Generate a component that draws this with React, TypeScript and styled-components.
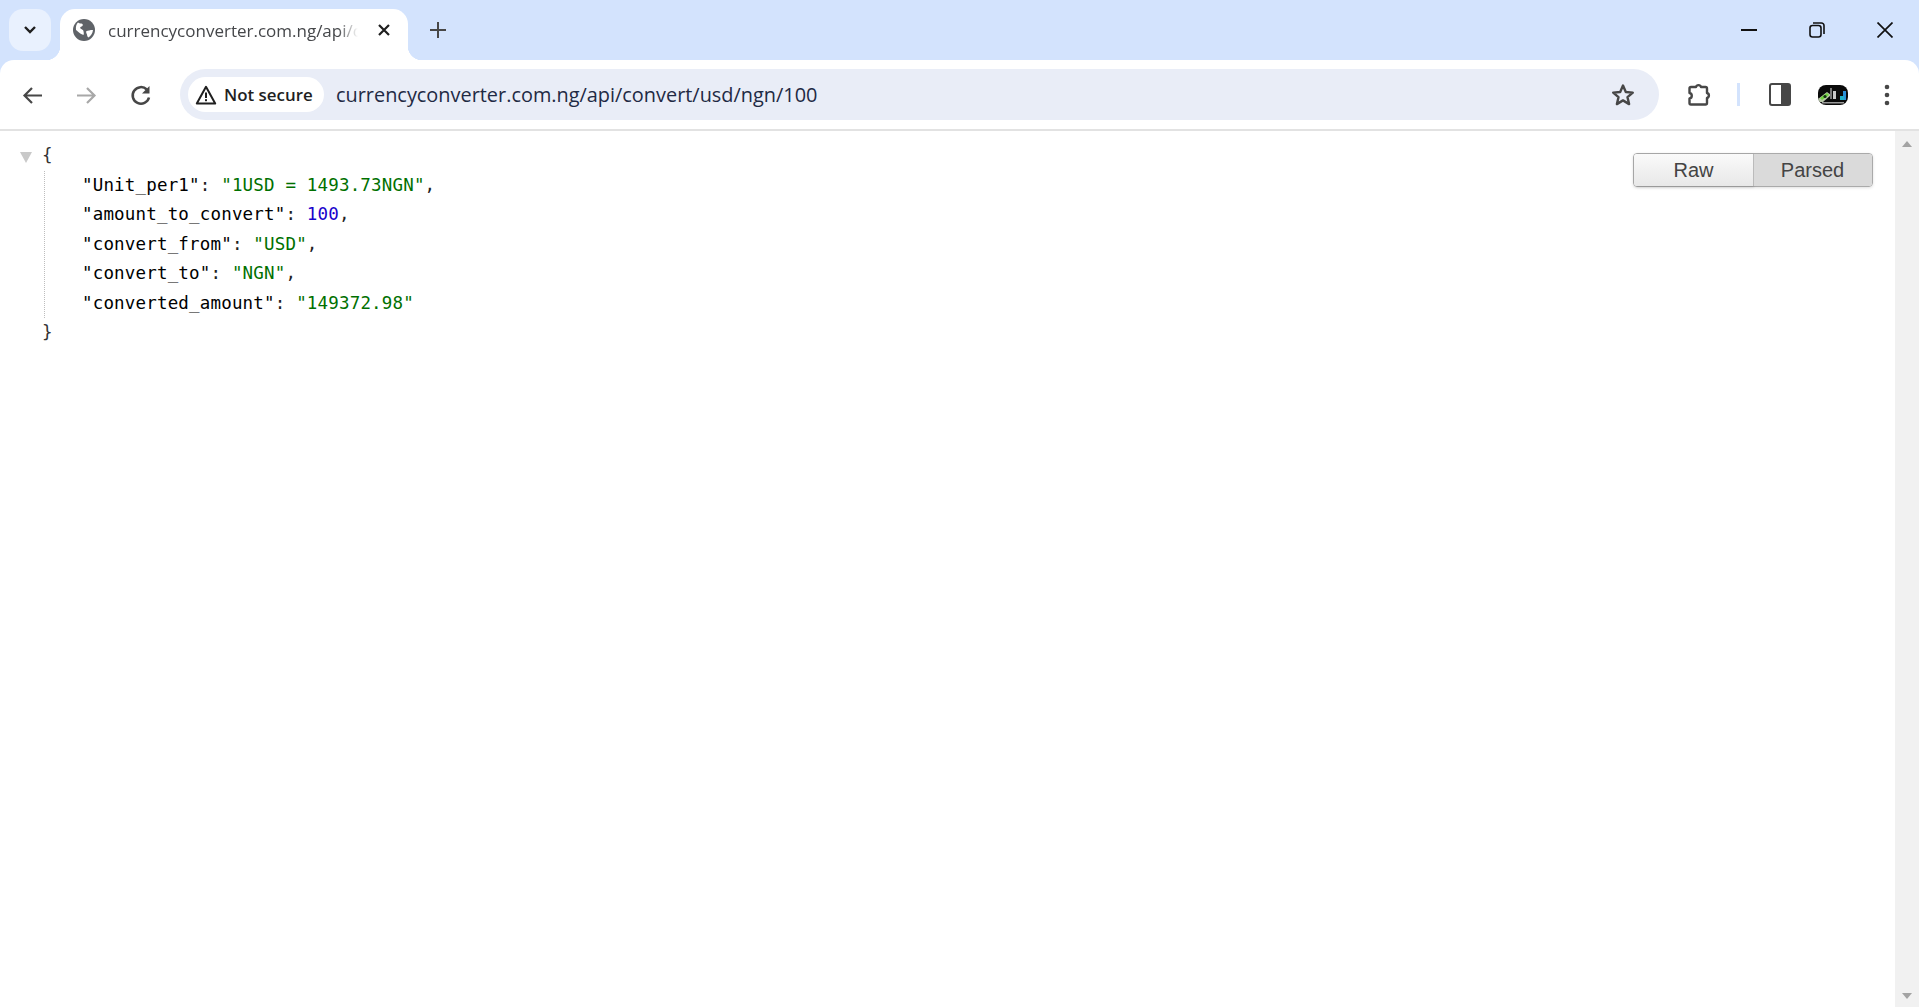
import React from 'react';
import styled, {createGlobalStyle} from "styled-components";

const GlobalStyle = createGlobalStyle`
  html, body {
    margin: 0;
    padding: 0;
    height: 100%;
    overflow: hidden;
    background: #d3e3fd;
  }
  #root {
    height: 100%;
  }
`

const uiFont = `"Open Sans", "Noto Sans", "Liberation Sans", sans-serif`

const BackIcon = ({color}: { color: string }) => (
    <svg width="24" height="24" viewBox="0 0 24 24" fill="none" stroke={color} strokeWidth="2.2">
        <path d="M21 12.5H4M11 5l-7.5 7.500L11 20"/>
    </svg>
)

const ForwardIcon = ({color}: { color: string }) => (
    <svg width="24" height="24" viewBox="0 0 24 24" fill="none" stroke={color} strokeWidth="2.2">
        <path d="M3 12.5h17M13 5l7.500 7.500L13 20"/>
    </svg>
)

const ReloadIcon = () => (
    <svg width="24" height="24" viewBox="0 0 24 24">
        <path d="M20 14.500a8.300 8.300 0 1 1-2.200-8" fill="none" stroke="#474747" strokeWidth="2.500"/>
        <path d="M20.500 3v7.500H13z" fill="#474747"/>
    </svg>
)

const GlobeIcon = () => (
    <svg width="22" height="22" viewBox="0 0 22 22">
        <circle cx="11" cy="11" r="11" fill="#5f6368"/>
        <path fill="#fff"
              d="M5 3.500c2 1.500 3 .5 4.500 1.500 1 1.500-.5 2.500-2 3-1 1.500 1 2 2.500 3 1 1.500.5 3 1 4.500-2.500 1-6-3-8-4.500C2.500 7.500 3.500 5 5 3.500zM13 12.500c2-1 4-1.500 7-1.500-.3 3-2 5.500-4.500 7.500-1-.5-1.500-2-1.500-3-.5-1-1-2-1-3z"/>
    </svg>
)

const WarningIcon = () => (
    <svg width="22" height="20" viewBox="0 0 22 20">
        <path d="M11 1.800 20.200 18.500H1.800z" fill="none" stroke="#1f1f1f" strokeWidth="2" strokeLinejoin="round"/>
        <rect x="10" y="7.500" width="2" height="5.500" fill="#1f1f1f"/>
        <rect x="10" y="14.200" width="2" height="2" fill="#1f1f1f"/>
    </svg>
)

const StarIcon = () => (
    <svg width="26" height="26" viewBox="0 0 26 26" fill="none" stroke="#474747" strokeWidth="2.4"
         strokeLinejoin="round">
        <path d="M13 3.500l2.800 6.500 7 .6-5.300 4.600 1.600 6.900-6.100-3.700-6.100 3.700 1.600-6.900-5.300-4.600 7-.6z"/>
    </svg>
)

const PuzzleIcon = () => (
    <svg width="26" height="26" viewBox="0 0 26 26" fill="none" stroke="#474747" strokeWidth="2.4"
         strokeLinejoin="round">
        <path
            d="M3.500 6.500a1.500 1.500 0 0 1 1.500-1.500h5a2.600 2.600 0 0 1 5 0h4.500a1.500 1.500 0 0 1 1.500 1.500v4.500a2.600 2.600 0 0 1 0 5v5a1.500 1.500 0 0 1-1.500 1.500H5a1.500 1.500 0 0 1-1.500-1.500v-4.500a2.800 2.800 0 0 0 0-5.500z"/>
    </svg>
)

const SidePanelIcon = () => (
    <svg width="22" height="23" viewBox="0 0 22 23">
        <rect x="1" y="1" width="20" height="21" rx="2" fill="#fff" stroke="#474747" strokeWidth="2"/>
        <rect x="12" y="1" width="9" height="21" fill="#474747"/>
    </svg>
)

const AvatarIcon = () => (
    <svg width="30" height="20" viewBox="0 0 30 20">
        <rect width="30" height="20" rx="8" fill="#0a0a0a"/>
        <path d="M0 14l9-7 4 3-8 7H2z" fill="#b8c8a8"/>
        <path d="M2 13l7-5 2 2-7 5z" fill="#6fd23c"/>
        <circle cx="7" cy="11.500" r="1.600" fill="#12300f"/>
        <rect x="12" y="3" width="2" height="11" fill="#777"/>
        <rect x="15" y="6" width="3" height="8" fill="#c8c8c8"/>
        <rect x="25" y="6" width="3" height="9" fill="#2a8fd8"/>
        <rect x="22" y="11" width="4" height="4" fill="#1fb0c8"/>
        <rect x="4" y="17" width="22" height="1.500" fill="#9a9a9a"/>
    </svg>
)

const DotsIcon = () => (
    <svg width="6" height="22" viewBox="0 0 6 22" fill="#474747">
        <circle cx="3" cy="3" r="2.300"/>
        <circle cx="3" cy="11" r="2.300"/>
        <circle cx="3" cy="19" r="2.300"/>
    </svg>
)

export default function App() {
    return (
        <>
            <GlobalStyle/>
            <Browser>
                <TabStrip>
                    <TabSearch>
                        <svg width="14" height="10" viewBox="0 0 14 10" fill="none" stroke="#1f1f1f" strokeWidth="2.400">
                            <path d="M2 2l5 5 5-5"/>
                        </svg>
                    </TabSearch>
                    <Tab>
                        <GlobeIcon/>
                        <TabTitle>currencyconverter.com.ng/api/convert/usd/ngn/100</TabTitle>
                        <svg width="14" height="14" viewBox="0 0 14 14" stroke="#1f1f1f" strokeWidth="2.200">
                            <path d="M2 2l10 10M12 2L2 12"/>
                        </svg>
                    </Tab>
                    <NewTab>
                        <svg width="16" height="16" viewBox="0 0 16 16" stroke="#474747" strokeWidth="2">
                            <path d="M8 0v16M0 8h16"/>
                        </svg>
                    </NewTab>
                    <WindowControls>
                        <WindowButton>
                            <svg width="16" height="2" viewBox="0 0 16 2"><rect width="16" height="2" fill="#111"/></svg>
                        </WindowButton>
                        <WindowButton>
                            <svg width="16" height="16" viewBox="0 0 16 16" fill="none" stroke="#111" strokeWidth="1.600">
                                <rect x="1" y="3.500" width="11" height="11.500" rx="2.500"/>
                                <path d="M4 1h8.500A2.500 2.500 0 0 1 15 3.500V12"/>
                            </svg>
                        </WindowButton>
                        <WindowButton>
                            <svg width="16" height="16" viewBox="0 0 16 16" stroke="#111" strokeWidth="1.700">
                                <path d="M.5.5l15 15M15.500.5l-15 15"/>
                            </svg>
                        </WindowButton>
                    </WindowControls>
                </TabStrip>

                <Toolbar>
                    <ToolButton $left={13}><BackIcon color="#474747"/></ToolButton>
                    <ToolButton $left={13}><ForwardIcon color="#a8a8a8"/></ToolButton>
                    <ToolButton $left={15}><ReloadIcon/></ToolButton>
                    <Omnibox>
                        <SecurityChip>
                            <WarningIcon/>
                            <span>Not secure</span>
                        </SecurityChip>
                        <Url>currencyconverter.com.ng/api/convert/usd/ngn/100</Url>
                        <StarSlot><StarIcon/></StarSlot>
                    </Omnibox>
                    <ToolButton $left={20}><PuzzleIcon/></ToolButton>
                    <ToolDivider/>
                    <ToolButton $left={20}><SidePanelIcon/></ToolButton>
                    <ToolButton $left={13}><AvatarIcon/></ToolButton>
                    <ToolButton $left={14}><DotsIcon/></ToolButton>
                </Toolbar>

                <Page>
                    <Viewer>
                        <JsonTree>
                            <Toggle/>
                            <div>
                                <Line><Brace>{"{"}</Brace></Line>
                                <Members>
                                    <Line><Key>"Unit_per1"</Key>: <Str>"1USD = 1493.73NGN"</Str>,</Line>
                                    <Line><Key>"amount_to_convert"</Key>: <Num>100</Num>,</Line>
                                    <Line><Key>"convert_from"</Key>: <Str>"USD"</Str>,</Line>
                                    <Line><Key>"convert_to"</Key>: <Str>"NGN"</Str>,</Line>
                                    <Line><Key>"converted_amount"</Key>: <Str>"149372.98"</Str></Line>
                                </Members>
                                <Line><Brace>{"}"}</Brace></Line>
                            </div>
                        </JsonTree>
                        <ModeSwitch>
                            <ModeButton>Raw</ModeButton>
                            <ModeButton $active>Parsed</ModeButton>
                        </ModeSwitch>
                    </Viewer>
                    <Scrollbar>
                        <ScrollArrow/>
                        <ScrollArrow $down/>
                    </Scrollbar>
                </Page>
            </Browser>
        </>
    );
};

const Browser = styled.div`
  height: 100%;
  display: flex;
  flex-direction: column;
  font-family: ${uiFont};
`

const TabStrip = styled.div`
  height: 60px;
  flex-shrink: 0;
  display: flex;
  align-items: flex-end;
  background: #d3e3fd;
`

const TabSearch = styled.div`
  width: 42px;
  height: 42px;
  margin: 0 9px 9px 9px;
  border-radius: 14px;
  background: #e9f1fe;
  display: flex;
  align-items: center;
  justify-content: center;
`

const Tab = styled.div`
  position: relative;
  width: 348px;
  height: 51px;
  box-sizing: border-box;
  padding: 0 17px 0 13px;
  display: flex;
  align-items: center;
  background: #fff;
  border-radius: 15px 15px 0 0;

  > svg:first-child {
    flex-shrink: 0;
    margin-top: -9px;
  }

  > svg:last-child {
    flex-shrink: 0;
    margin-top: -9px;
  }

  &::before, &::after {
    content: "";
    position: absolute;
    bottom: 0;
    width: 14px;
    height: 14px;
  }

  &::before {
    left: -14px;
    background: radial-gradient(circle at 0 0, transparent 14px, #fff 14.500px);
  }

  &::after {
    right: -14px;
    background: radial-gradient(circle at 100% 0, transparent 14px, #fff 14.500px);
  }
`

const TabTitle = styled.div`
  width: 250px;
  margin: -8px 19px 0 13px;
  font-size: 17px;
  color: #45474a;
  white-space: nowrap;
  overflow: hidden;
  -webkit-mask-image: linear-gradient(to right, #000 92%, transparent);
  mask-image: linear-gradient(to right, #000 92%, transparent);
`

const NewTab = styled.div`
  width: 32px;
  height: 32px;
  margin: 0 0 14px 14px;
  display: flex;
  align-items: center;
  justify-content: center;
`

const WindowControls = styled.div`
  margin-left: auto;
  height: 60px;
  display: flex;
  align-items: center;
`

const WindowButton = styled.div`
  width: 68px;
  height: 60px;
  display: flex;
  align-items: center;
  justify-content: center;
`

const Toolbar = styled.div`
  height: 69px;
  flex-shrink: 0;
  display: flex;
  align-items: center;
  padding-right: 12px;
  background: #fff;
  border-radius: 14px 14px 0 0;
  border-bottom: 2px solid #e2e2e2;
`

const ToolButton = styled.div<{ $left: number }>`
  width: 40px;
  height: 40px;
  flex-shrink: 0;
  margin-left: ${props => props.$left}px;
  display: flex;
  align-items: center;
  justify-content: center;
`

const ToolDivider = styled.div`
  width: 3px;
  height: 23px;
  margin-left: 18px;
  background: #d3e3fd;
`

const Omnibox = styled.div`
  flex: 1;
  height: 51px;
  margin-left: 19px;
  display: flex;
  align-items: center;
  padding: 0 23px 0 8px;
  background: #e9edf7;
  border-radius: 26px;
`

const SecurityChip = styled.div`
  height: 35px;
  width: 136px;
  box-sizing: border-box;
  padding-left: 7px;
  display: flex;
  align-items: center;
  gap: 7px;
  background: #fff;
  border-radius: 18px;
  font-size: 16.900px;
  font-weight: 600;
  color: #1f1f1f;
`

const Url = styled.div`
  margin-left: 12px;
  flex: 1;
  font-size: 19.900px;
  color: #1f2a44;
  white-space: nowrap;
`

const StarSlot = styled.div`
  width: 26px;
  height: 26px;
  display: flex;
`

const Page = styled.div`
  flex: 1;
  min-height: 0;
  display: flex;
  background: #fff;
`

const Viewer = styled.div`
  flex: 1;
  display: flex;
  justify-content: space-between;
  align-items: flex-start;
  padding: 10px 22px 0 20px;
`

const JsonTree = styled.div`
  display: flex;
  font-family: "DejaVu Sans Mono", "Liberation Mono", monospace;
  font-size: 17.500px;
  letter-spacing: 0.170px;
  line-height: 29.500px;
  color: #1f1f1f;
  white-space: pre;
`

const Toggle = styled.div`
  width: 0;
  height: 0;
  margin: 11px 10px 0 0;
  border-left: 6px solid transparent;
  border-right: 6px solid transparent;
  border-top: 11px solid #c9c9c9;
`

const Line = styled.div`
  height: 29.500px;
`

const Brace = styled.span`
  color: #333;
`

const Members = styled.div`
  margin-left: 2px;
  padding-left: 37px;
  border-left: 1px dotted #bdbdbd;
`

const Key = styled.span`
  color: #000;
`

const Str = styled.span`
  color: #007000;
`

const Num = styled.span`
  color: #1a01cc;
`

const ModeSwitch = styled.div`
  margin-top: 12px;
  display: flex;
  border: 1px solid #aaa;
  border-radius: 4px;
  font-family: "Liberation Sans", Arial, sans-serif;
  font-size: 20px;
  color: #444;
  box-shadow: 0 1px 3px rgba(0, 0, 0, .12);
`

const ModeButton = styled.div<{ $active?: boolean }>`
  width: 119px;
  height: 32px;
  line-height: 32px;
  text-align: center;
  border-radius: ${props => props.$active ? "0 3px 3px 0" : "3px 0 0 3px"};
  background: ${props => props.$active ? "#dadada" : "linear-gradient(to bottom, #fafafa, #e8e8e8)"};
  box-shadow: ${props => props.$active ? "inset 1px 0 0 #bbb" : "1px 1px 3px rgba(0, 0, 0, .15)"};
`

const Scrollbar = styled.div`
  width: 24px;
  flex-shrink: 0;
  display: flex;
  flex-direction: column;
  justify-content: space-between;
  align-items: center;
  padding: 10px 0 8px;
  box-sizing: border-box;
  background: #f1f1f1;
`

const ScrollArrow = styled.div<{ $down?: boolean }>`
  width: 0;
  height: 0;
  border-left: 5.500px solid transparent;
  border-right: 5.500px solid transparent;
  ${props => props.$down ? "border-top: 6px solid #a3a3a3;" : "border-bottom: 6px solid #a3a3a3;"}
`
